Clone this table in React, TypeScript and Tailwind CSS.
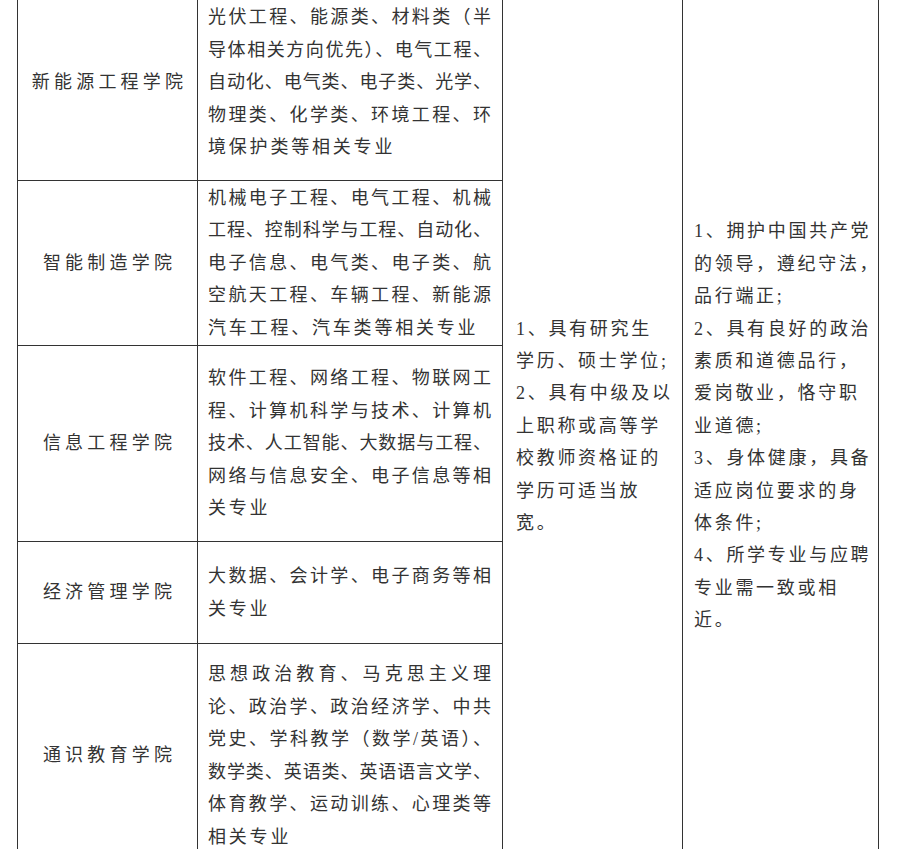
const font = { fontFamily: '"Liberation Serif", "Noto Sans CJK SC", serif' };

type Row = { name: string; lines: string[]; full: number };

// full = how many leading lines are stretched to the cell width
const rows: Row[] = [
  {
    name: "新能源工程学院",
    full: 4,
    lines: [
      "光伏工程、能源类、材料类（半",
      "导体相关方向优先）、电气工程、",
      "自动化、电气类、电子类、光学、",
      "物理类、化学类、环境工程、环",
      "境保护类等相关专业",
    ],
  },
  {
    name: "智能制造学院",
    full: 4,
    lines: [
      "机械电子工程、电气工程、机械",
      "工程、控制科学与工程、自动化、",
      "电子信息、电气类、电子类、航",
      "空航天工程、车辆工程、新能源",
      "汽车工程、汽车类等相关专业",
    ],
  },
  {
    name: "信息工程学院",
    full: 4,
    lines: [
      "软件工程、网络工程、物联网工",
      "程、计算机科学与技术、计算机",
      "技术、人工智能、大数据与工程、",
      "网络与信息安全、电子信息等相",
      "关专业",
    ],
  },
  {
    name: "经济管理学院",
    full: 1,
    lines: ["大数据、会计学、电子商务等相", "关专业"],
  },
  {
    name: "通识教育学院",
    full: 5,
    lines: [
      "思想政治教育、马克思主义理",
      "论、政治学、政治经济学、中共",
      "党史、学科教学（数学/英语）、",
      "数学类、英语类、英语语言文学、",
      "体育教学、运动训练、心理类等",
      "相关专业",
    ],
  },
];

const education = [
  "1、具有研究生",
  "学历、硕士学位;",
  "2、具有中级及以",
  "上职称或高等学",
  "校教师资格证的",
  "学历可适当放",
  "宽。",
];

const other = [
  "1、拥护中国共产党",
  "的领导，遵纪守法，",
  "品行端正;",
  "2、具有良好的政治",
  "素质和道德品行，",
  "爱岗敬业，恪守职",
  "业道德;",
  "3、身体健康，具备",
  "适应岗位要求的身",
  "体条件;",
  "4、所学专业与应聘",
  "专业需一致或相",
  "近。",
];

function MajorCell({ row }: { row: Row }) {
  return (
    <div className="flex flex-col justify-center border-r border-b border-[#333] pl-[10px] pr-[11px]">
      {row.lines.map((line, i) =>
        i < row.full ? (
          <div key={i} className="whitespace-nowrap text-justify leading-[32.5px] [text-align-last:justify]">
            {line}
          </div>
        ) : (
          <div key={i} className="whitespace-nowrap leading-[32.5px] tracking-[2.8px]">
            {line}
          </div>
        )
      )}
    </div>
  );
}

function LinesCell({ lines, className }: { lines: string[]; className: string }) {
  return (
    <div className={`row-span-5 flex flex-col justify-center border-r border-b border-[#333] ${className}`}>
      {lines.map((line) => (
        <div key={line} className="whitespace-nowrap leading-[32.4px] tracking-[2.7px]">
          {line}
        </div>
      ))}
    </div>
  );
}

export default function App() {
  return (
    <div lang="zh-CN" className="h-[849px] overflow-hidden bg-white text-[18px] text-[#333]" style={font}>
      <div className="ml-[17px] -mt-[16px] grid grid-cols-[180px_305px_180px_196px] grid-rows-[196px_165px_196px_102px_224px] border-t border-l border-[#333]">
        {rows.map((row, i) => (
          <div key={row.name} className="contents">
            <div className="flex items-center justify-center border-r border-b border-[#333] pl-[4px] tracking-[4.2px]">
              {row.name}
            </div>
            <MajorCell row={row} />
            {i === 0 && (
              <>
                <LinesCell lines={education} className="pl-[13px]" />
                <LinesCell lines={other} className="pl-[11px]" />
              </>
            )}
          </div>
        ))}
      </div>
    </div>
  );
}
